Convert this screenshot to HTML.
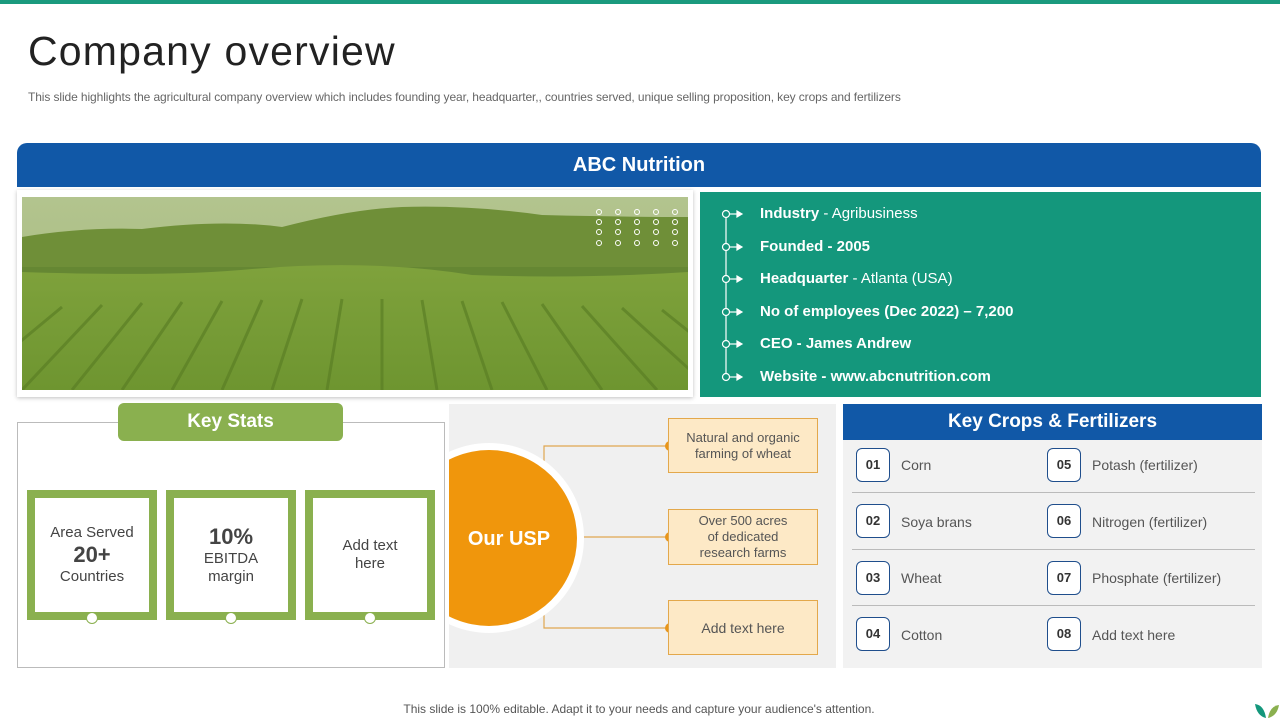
<!DOCTYPE html>
<html><head><meta charset="utf-8"><style>
*{margin:0;padding:0;box-sizing:border-box}
body{width:1280px;height:720px;background:#fff;position:relative;overflow:hidden;font-family:"Liberation Sans",sans-serif}
.a{position:absolute}
.topbar{left:0;top:0;width:1280px;height:4px;background:#1a9a7e}
.title{left:28px;top:28px;font-size:41px;color:#222;letter-spacing:1.2px;font-family:"Liberation Sans",sans-serif;font-weight:normal}
.sub{left:28px;top:90px;font-size:12px;color:#666;letter-spacing:-0.1px}
.bh{left:17px;top:143px;width:1244px;height:44px;background:#1158a7;border-radius:10px 10px 0 0;color:#fff;font-weight:bold;font-size:20px;text-align:center;line-height:44px}
.frame{left:17px;top:190px;width:676px;height:207px;background:#fff;box-shadow:0 1px 4px rgba(0,0,0,.25)}
.teal{left:700px;top:192px;width:561px;height:205px;background:#14977c}
.li{position:absolute;left:60px;color:#fff;font-size:15px}
.li b{font-weight:bold}
.ks{left:17px;top:422px;width:428px;height:246px;border:1px solid #bbb}
.tab{left:118px;top:403px;width:225px;height:38px;background:#8ab04f;border-radius:6px;color:#fff;font-weight:bold;font-size:19px;text-align:center;line-height:38px}
.sb{top:490px;width:130px;height:130px;border:8px solid #8ab04f;background:#fff;display:flex;flex-direction:column;justify-content:center;align-items:center;color:#444;font-size:15px;text-align:center;line-height:18px}
.dot{top:612px;width:12px;height:12px;border-radius:50%;background:#fff;border:1px solid #8ab04f}
.usp{left:449px;top:404px;width:387px;height:264px;background:#f0f0f0;overflow:hidden}
.ub{left:668px;width:150px;background:#fde9c6;border:1px solid #e3a84b;color:#555;font-size:13px;text-align:center;display:flex;align-items:center;justify-content:center;line-height:16px}
.kc{left:843px;top:404px;width:419px;height:36px;background:#1158a7;color:#fff;font-weight:bold;font-size:19px;text-align:center;line-height:36px}
.kp{left:843px;top:440px;width:419px;height:228px;background:#f2f2f2}
.nb{width:34px;height:34px;border:1px solid #1f4e8c;border-radius:6px;background:#fff;color:#333;font-weight:bold;font-size:13px;text-align:center;line-height:32px}
.nt{color:#555;font-size:14px}
.hr{left:852px;width:403px;height:1px;background:#bbb}
.foot{left:0;width:1278px;top:702px;text-align:center;font-size:12px;color:#555}
</style></head><body>
<div class="a topbar"></div>
<div class="a title">Company overview</div>
<div class="a sub">This slide highlights the agricultural company overview which includes founding year, headquarter,, countries served, unique selling proposition, key crops and fertilizers</div>
<div class="a bh">ABC Nutrition</div>
<div class="a frame"></div>
<svg class="a" style="left:22px;top:197px" width="666" height="193" viewBox="0 0 666 193">
<defs>
<linearGradient id="sky" x1="0" y1="0" x2="0" y2="1"><stop offset="0" stop-color="#b3c48e"/><stop offset="1" stop-color="#9fb77a"/></linearGradient>
<linearGradient id="fld" x1="0" y1="0" x2="0" y2="1"><stop offset="0" stop-color="#7fa23c"/><stop offset="1" stop-color="#6e9530"/></linearGradient>
</defs>
<rect width="666" height="193" fill="url(#sky)"/>
<path d="M0 40 Q60 30 120 32 Q200 22 260 30 Q330 12 380 10 Q450 8 520 18 Q600 20 666 20 L666 110 L0 110Z" fill="#6f8f38"/>
<path d="M0 70 L666 70 L666 120 L0 120Z" fill="#5f8230" opacity=".6"/>
<path d="M0 75 Q150 80 230 72 Q350 62 450 78 Q560 82 666 75 L666 193 L0 193Z" fill="url(#fld)"/>
<g stroke="#5b7f25" stroke-width="3" opacity=".7">
<line x1="40" y1="110" x2="-60" y2="193"/><line x1="80" y1="108" x2="0" y2="193"/><line x1="120" y1="106" x2="50" y2="193"/><line x1="160" y1="105" x2="100" y2="193"/><line x1="200" y1="104" x2="150" y2="193"/><line x1="240" y1="103" x2="200" y2="193"/><line x1="280" y1="102" x2="250" y2="193"/><line x1="320" y1="102" x2="305" y2="193"/><line x1="360" y1="102" x2="360" y2="193"/><line x1="400" y1="103" x2="415" y2="193"/><line x1="440" y1="104" x2="470" y2="193"/><line x1="480" y1="105" x2="525" y2="193"/><line x1="520" y1="107" x2="580" y2="193"/><line x1="560" y1="109" x2="635" y2="193"/><line x1="600" y1="111" x2="690" y2="193"/><line x1="640" y1="113" x2="740" y2="193"/>
</g>
<g fill="none" stroke="#fff" stroke-width="1">
<g id="r"><circle cx="577" cy="15" r="2.5"/><circle cx="596" cy="15" r="2.5"/><circle cx="615" cy="15" r="2.5"/><circle cx="634" cy="15" r="2.5"/><circle cx="653" cy="15" r="2.5"/></g>
<use href="#r" y="10"/><use href="#r" y="20"/><use href="#r" y="31"/>
</g>
</svg>
<div class="a teal">
<svg class="a" style="left:18px;top:14px" width="30" height="180" viewBox="0 0 30 180">
<line x1="8" y1="8" x2="8" y2="171" stroke="#fff" stroke-width="1.2"/>
<g fill="#14977c" stroke="#fff" stroke-width="1.2">
<circle cx="8" cy="8" r="3.5"/><circle cx="8" cy="41" r="3.5"/><circle cx="8" cy="73" r="3.5"/><circle cx="8" cy="106" r="3.5"/><circle cx="8" cy="138" r="3.5"/><circle cx="8" cy="171" r="3.5"/></g>
<g stroke="#fff" stroke-width="1.2" fill="#fff">
<line x1="12" y1="8" x2="20" y2="8"/><path d="M19 5L24 8L19 11Z"/>
<line x1="12" y1="41" x2="20" y2="41"/><path d="M19 38L24 41L19 44Z"/>
<line x1="12" y1="73" x2="20" y2="73"/><path d="M19 70L24 73L19 76Z"/>
<line x1="12" y1="106" x2="20" y2="106"/><path d="M19 103L24 106L19 109Z"/>
<line x1="12" y1="138" x2="20" y2="138"/><path d="M19 135L24 138L19 141Z"/>
<line x1="12" y1="171" x2="20" y2="171"/><path d="M19 168L24 171L19 174Z"/></g>
</svg>
<div class="li" style="top:13px"><b>Industry</b> - Agribusiness</div>
<div class="li" style="top:46px"><b>Founded - 2005</b></div>
<div class="li" style="top:78px"><b>Headquarter</b> - Atlanta (USA)</div>
<div class="li" style="top:111px"><b>No of employees (Dec 2022) – 7,200</b></div>
<div class="li" style="top:143px"><b>CEO - James Andrew</b></div>
<div class="li" style="top:176px"><b>Website - www.abcnutrition.com</b></div>
</div>

<div class="a ks"></div>
<div class="a tab">Key Stats</div>
<div class="a sb" style="left:27px">Area Served<b style="font-size:22px;line-height:26px">20+</b>Countries</div>
<div class="a sb" style="left:166px"><b style="font-size:22px;line-height:26px">10%</b>EBITDA<br>margin</div>
<div class="a sb" style="left:305px">Add text<br>here</div>
<div class="a dot" style="left:86px"></div><div class="a dot" style="left:225px"></div><div class="a dot" style="left:364px"></div>

<div class="a usp">
<svg class="a" style="left:0;top:0" width="387" height="264">
<g stroke="#dfa650" stroke-width="1.2" fill="none">
<polyline points="95,60 95,42 220,42"/><line x1="130" y1="133" x2="220" y2="133"/><polyline points="95,205 95,224 220,224"/></g>
<g fill="#e8951a"><circle cx="221" cy="42" r="5"/><circle cx="221" cy="133" r="5"/><circle cx="221" cy="224" r="5"/></g>
<circle cx="40" cy="134" r="95" fill="#fff"/>
<circle cx="40" cy="134" r="88" fill="#f0960c"/>
<text x="60" y="141" text-anchor="middle" fill="#fff" font-family="Liberation Sans" font-weight="bold" font-size="20">Our USP</text>
</svg>
</div>
<div class="a ub" style="top:418px;height:55px">Natural and organic<br>farming of wheat</div>
<div class="a ub" style="top:509px;height:56px">Over 500 acres<br>of dedicated<br>research farms</div>
<div class="a ub" style="top:600px;height:55px;font-size:14px">Add text here</div>

<div class="a kc">Key Crops &amp; Fertilizers</div>
<div class="a kp"></div>
<div class="a hr" style="top:492px"></div><div class="a hr" style="top:549px"></div><div class="a hr" style="top:605px"></div>
<div class="a nb" style="left:856px;top:448px">01</div><div class="a nt" style="left:901px;top:457px">Corn</div>
<div class="a nb" style="left:856px;top:504px">02</div><div class="a nt" style="left:901px;top:514px">Soya brans</div>
<div class="a nb" style="left:856px;top:561px">03</div><div class="a nt" style="left:901px;top:570px">Wheat</div>
<div class="a nb" style="left:856px;top:617px">04</div><div class="a nt" style="left:901px;top:627px">Cotton</div>
<div class="a nb" style="left:1047px;top:448px">05</div><div class="a nt" style="left:1092px;top:457px">Potash (fertilizer)</div>
<div class="a nb" style="left:1047px;top:504px">06</div><div class="a nt" style="left:1092px;top:514px">Nitrogen (fertilizer)</div>
<div class="a nb" style="left:1047px;top:561px">07</div><div class="a nt" style="left:1092px;top:570px">Phosphate (fertilizer)</div>
<div class="a nb" style="left:1047px;top:617px">08</div><div class="a nt" style="left:1092px;top:627px">Add text here</div>

<div class="a foot">This slide is 100% editable. Adapt it to your needs and capture your audience's attention.</div>
<svg class="a" style="left:1254px;top:703px" width="26" height="17" viewBox="0 0 26 17">
<path d="M1 1 Q10 2 12 15 Q3 13 1 1Z" fill="#14977c"/>
<path d="M25 2 Q16 3 14 15 Q23 13 25 2Z" fill="#8ab04f"/>
</svg>
</body></html>
